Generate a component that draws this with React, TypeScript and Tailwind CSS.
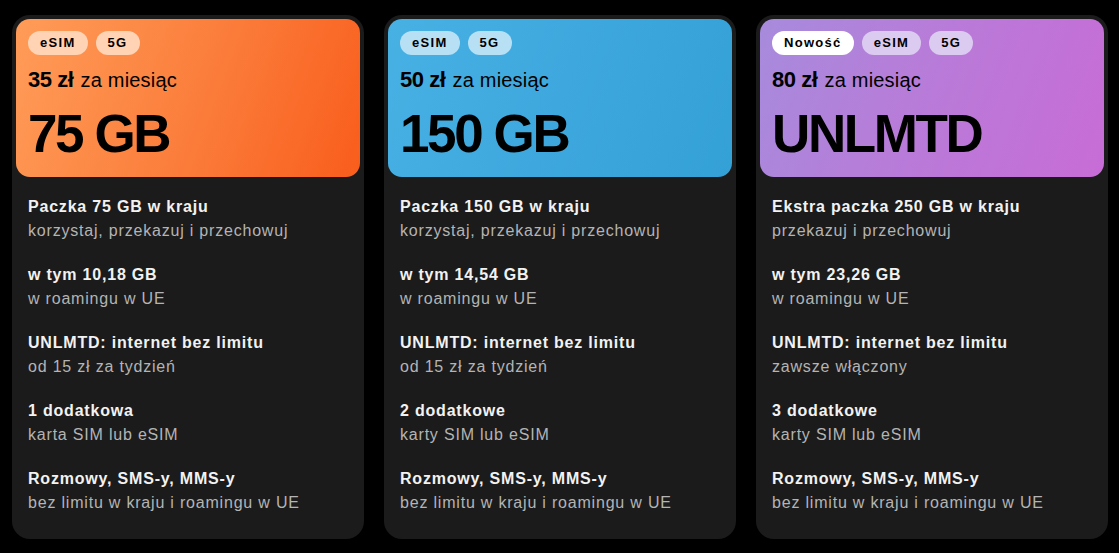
import React from 'react';

type Plan = {
  tags: string[];
  price: string;
  volume: string;
  head: string;
  chip: string;
  rows: [string, string][];
};

const plans: Plan[] = [
  {
    tags: ['eSIM', '5G'],
    price: '35 zł',
    volume: '75 GB',
    head: 'bg-[linear-gradient(110deg,#ff9c58_0%,#fb7c3a_55%,#f95d1c_100%)]',
    chip: 'bg-[#ffd3b4]',
    rows: [
      ['Paczka 75 GB w kraju', 'korzystaj, przekazuj i przechowuj'],
      ['w tym 10,18 GB', 'w roamingu w UE'],
      ['UNLMTD: internet bez limitu', 'od 15 zł za tydzień'],
      ['1 dodatkowa', 'karta SIM lub eSIM'],
      ['Rozmowy, SMS-y, MMS-y', 'bez limitu w kraju i roamingu w UE'],
    ],
  },
  {
    tags: ['eSIM', '5G'],
    price: '50 zł',
    volume: '150 GB',
    head: 'bg-[linear-gradient(110deg,#47b1e4_0%,#3ea8de_50%,#33a0d6_100%)]',
    chip: 'bg-[#b8e0f5]',
    rows: [
      ['Paczka 150 GB w kraju', 'korzystaj, przekazuj i przechowuj'],
      ['w tym 14,54 GB', 'w roamingu w UE'],
      ['UNLMTD: internet bez limitu', 'od 15 zł za tydzień'],
      ['2 dodatkowe', 'karty SIM lub eSIM'],
      ['Rozmowy, SMS-y, MMS-y', 'bez limitu w kraju i roamingu w UE'],
    ],
  },
  {
    tags: ['Nowość', 'eSIM', '5G'],
    price: '80 zł',
    volume: 'UNLMTD',
    head: 'bg-[linear-gradient(110deg,#a78bdc_0%,#b97ad8_50%,#c86cd6_100%)]',
    chip: 'bg-[#dccbf0]',
    rows: [
      ['Ekstra paczka 250 GB w kraju', 'przekazuj i przechowuj'],
      ['w tym 23,26 GB', 'w roamingu w UE'],
      ['UNLMTD: internet bez limitu', 'zawsze włączony'],
      ['3 dodatkowe', 'karty SIM lub eSIM'],
      ['Rozmowy, SMS-y, MMS-y', 'bez limitu w kraju i roamingu w UE'],
    ],
  },
];

function Card({ p }: { p: Plan }) {
  return (
    <div className="w-[352px] rounded-[18px] bg-[#1b1b1b] p-1">
      <div className={`rounded-[14px] ${p.head} px-3 pt-3 pb-[17px] text-black`}>
        <div className="flex gap-2">
          {p.tags.map((t) => (
            <span
              key={t}
              className={`h-6 rounded-full px-3 text-[13px] leading-6 font-bold tracking-widest ${t === 'Nowość' ? 'bg-white' : p.chip}`}
            >
              {t}
            </span>
          ))}
        </div>
        <div className="mt-[10px] flex h-7 items-baseline gap-[7px] pt-[1px]">
          <span className="text-[22px] leading-7 font-bold tracking-[-0.02em]">{p.price}</span>
          <span className="text-[20px] leading-7 tracking-[0.01em]">za miesiąc</span>
        </div>
        <div className="mt-[15px] text-[53px] leading-[52px] font-bold tracking-[-0.045em]">{p.volume}</div>
      </div>
      <div className="flex flex-col gap-5 px-3 pt-[18px] pb-5 text-base leading-6 tracking-wider">
        {p.rows.map(([a, b]) => (
          <div key={a}>
            <div className="font-bold text-[#f2f2f2]">{a}</div>
            <div className="text-[#b4b4b4]">{b}</div>
          </div>
        ))}
      </div>
    </div>
  );
}

export default function App() {
  return (
    <div className="min-h-screen bg-black pt-[15px] pl-3" style={{ fontFamily: '"Liberation Sans", Arial, sans-serif' }}>
      <div className="flex gap-5">
        {plans.map((p) => (
          <Card key={p.volume} p={p} />
        ))}
      </div>
    </div>
  );
}
